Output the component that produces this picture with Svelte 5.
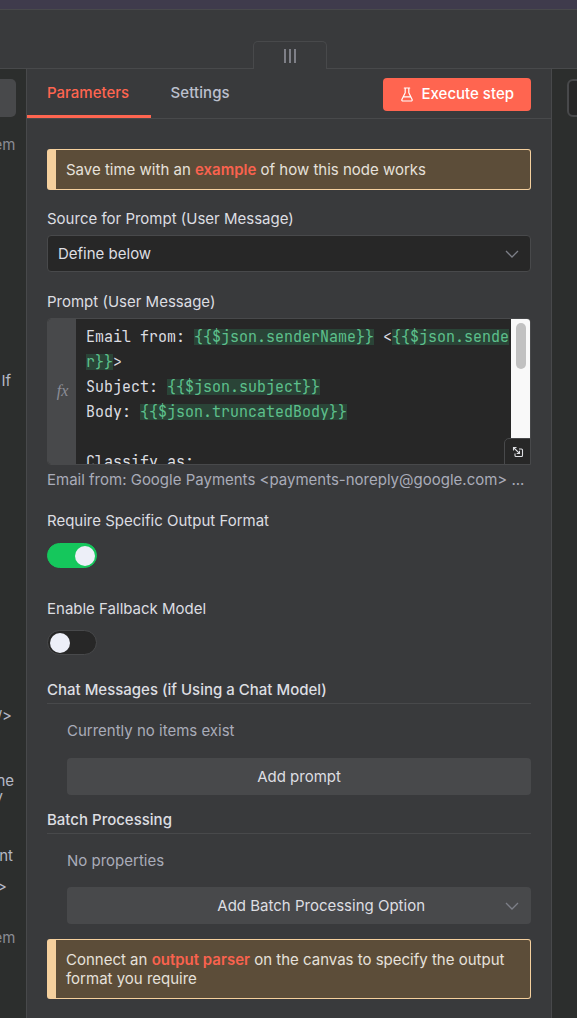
<script>
  let requireFormat = $state(true);
  let fallback = $state(false);
  const fragments = [
    { text: 'em', top: 135, right: 10.5, dim: true },
    { text: 'If', top: 371, right: 15, dim: false },
    { text: '/>', top: 706, right: 14, dim: false },
    { text: 'he', top: 771, right: 12, dim: false },
    { text: 'y', top: 787, right: 23, dim: false },
    { text: 'nt', top: 846, right: 13, dim: false },
    { text: '>', top: 877, right: 19, dim: false },
    { text: 'em', top: 928, right: 10.5, dim: true }
  ];
  const rows = fragments.map((f, i) => ({
    ...f,
    gap: i === 0 ? f.top - 117 : f.top - fragments[i - 1].top - 16
  }));
</script>

{#snippet chevron()}
  <svg class="chevron" viewBox="0 0 14 8" width="14" height="8"><path d="M1 1l6 6 6-6" /></svg>
{/snippet}

<div class="app">
  <div class="canvas-strip"></div>
  <div class="topbar">
    <div class="grip"><i></i><i></i><i></i></div>
  </div>
  <div class="columns">
    <aside class="input-side">
      <div class="side-button"></div>
      {#each rows as r}
        <div class="fragment" class:dim={r.dim} style="margin-top:{r.gap}px;padding-right:{r.right}px">{r.text}</div>
      {/each}
    </aside>

    <main>
      <header>
        <nav>
          <span class="tab active">Parameters</span>
          <span class="tab second">Settings</span>
        </nav>
        <button class="execute">
          <svg width="12" height="15" viewBox="0 0 12 15"><path d="M3.300 1h5.400M4.200 1v4.800L1 12.200c-.5 1 0 1.800.9 1.800h8.200c.9 0 1.400-.8.9-1.800L7.800 5.800V1M2.600 9.800h6.800" /></svg>
          <span>Execute step</span>
        </button>
      </header>

      <section class="body">
        <div class="notice first">Save time with an <b>example</b> of how this node works</div>

        <div class="label l1">Source for Prompt (User Message)</div>
        <div class="select"><span>Define below</span>{@render chevron()}</div>

        <div class="label l2">Prompt (User Message)</div>
        <div class="editor">
          <div class="fx">fx</div>
          <div class="code">
            <div>Email from: <mark>{'{{$json.senderName}}'}</mark> &lt;<mark>{'{{$json.sende'}</mark></div>
            <div><mark>{'r}}'}</mark>&gt;</div>
            <div>Subject: <mark>{'{{$json.subject}}'}</mark></div>
            <div>Body: <mark>{'{{$json.truncatedBody}}'}</mark></div>
            <div></div>
            <div>Classify as:</div>
          </div>
          <div class="scroll"><div class="thumb"></div></div>
          <div class="expand">
            <svg width="12" height="12" viewBox="0 0 12 12"><path d="M1.500 4.500v-3h3M1.500 1.500l5.700 5.700M7.500 4.700v2.800H4.700M7 3h2.500q1 0 1 1v5.500q0 1-1 1H4q-1 0-1-1V7.500" /></svg>
          </div>
        </div>
        <div class="hint">Email from: Google Payments &lt;payments-noreply@google.com&gt; ...</div>

        <div class="label l3">Require Specific Output Format</div>
        <button class="toggle" class:on={requireFormat} aria-label="Require Specific Output Format" onclick={() => (requireFormat = !requireFormat)}><i></i></button>

        <div class="label l4">Enable Fallback Model</div>
        <button class="toggle" class:on={fallback} aria-label="Enable Fallback Model" onclick={() => (fallback = !fallback)}><i></i></button>

        <div class="heading h1">Chat Messages (if Using a Chat Model)</div>
        <div class="group">
          <div class="empty">Currently no items exist</div>
          <button class="add">Add prompt</button>
        </div>

        <div class="heading h2">Batch Processing</div>
        <div class="group second">
          <div class="empty">No properties</div>
          <button class="add wide"><span>Add Batch Processing Option</span>{@render chevron()}</button>
        </div>

        <div class="notice last">Connect an <b>output parser</b> on the canvas to specify the output<br />format you require</div>
      </section>
    </main>

    <aside class="output-side"><div class="side-outline"></div></aside>
  </div>
</div>

<style>
  :global(body) { background: #393a3c; }
  .app, .app * { box-sizing: border-box; }
  .app {
    width: 577px; height: 1018px; overflow: hidden;
    display: flex; flex-direction: column;
    background: #393a3c; color: #dddee2;
    font: 400 15px/20px Inter, sans-serif;
  }
  button { font: inherit; color: inherit; border: 0; padding: 0; margin: 0; }
  svg { fill: none; stroke: currentColor; flex: none; }
  .canvas-strip { height: 9px; background: #3f3b4c; flex: none; }
  .topbar {
    height: 60px; flex: none; border-top: 1px solid #48494b; border-bottom: 1px solid #48494b;
    display: flex; align-items: flex-end; padding-left: 253px;
  }
  .grip {
    width: 74px; height: 28px; margin-bottom: -1px; background: #393a3c;
    border: 1px solid #48494b; border-bottom: 0; border-radius: 5px 5px 0 0;
    display: flex; justify-content: center; gap: 3px; padding-top: 7px;
  }
  .grip i { width: 2px; height: 14px; background: #7e7f87; }
  .columns { flex: 1; min-height: 0; display: grid; grid-template-columns: 26px 526px 25px; }
  .input-side { background: #2c2e2d; padding-top: 10px; overflow: hidden; }
  .side-button { width: 16px; height: 38px; background: #48494b; border-radius: 0 5px 5px 0; }
  .fragment {
    display: flex; justify-content: flex-end; height: 16px; line-height: 20px;
    color: #b5b9c6; white-space: nowrap;
  }
  .fragment.dim { color: #898b94; }
  .output-side { background: #2c2e2d; padding: 10px 0 0 15px; overflow: hidden; }
  .side-outline { width: 30px; height: 38px; border: 2px solid #48494b; border-radius: 6px; background: #272727; }

  main { border-left: 1px solid #48494b; border-right: 1px solid #48494b; min-width: 0; }
  header {
    height: 50px; border-bottom: 1px solid #48494b; padding-right: 20px;
    display: flex; justify-content: space-between; align-items: flex-start;
  }
  nav { display: flex; height: 49px; font-weight: 500; }
  .tab { line-height: 48px; padding: 0 20px; color: #bcc0ce; }
  .tab.active { width: 124px; color: #ff6550; border-bottom: 3px solid #ff6550; }
  .tab.second { padding-left: 19.500px; letter-spacing: .1px; }
  .execute {
    margin-top: 9px; width: 148px; height: 33px; border-radius: 4px; background: #ff6550; color: #fff;
    display: flex; align-items: center; padding: 0 0 1px 18px; gap: 8.500px; font-weight: 500; white-space: nowrap;
  }
  .execute svg { stroke-width: 1.200; stroke-linejoin: round; stroke-linecap: round; margin-top: 1px; }

  .body { padding: 30px 20px 0; display: flex; flex-direction: column; white-space: nowrap; }
  .notice {
    flex: none; border: 1px solid #f5d09e; border-left-width: 9px; border-radius: 3px;
    background: #5c4d39; color: #e6e1db; padding-left: 10px; line-height: 19px;
  }
  .notice b { font-weight: 600; color: #f9624e; }
  .first { height: 41px; padding-top: 10px; }
  .last { height: 60px; padding-top: 10px; margin-top: 15px; }
  .label { height: 20px; }
  .l1 { margin: 19px 0 6px; }
  .select {
    height: 37px; border: 1px solid #48494b; border-radius: 4px; background: #272727;
    display: flex; align-items: center; justify-content: space-between; padding: 0 11px 0 10px;
  }
  .chevron { color: #7d7f88; stroke-width: 1.300; }
  .l2 { margin: 20px 0 6px; }
  .editor {
    position: relative; height: 147px; overflow: hidden; display: flex;
    border: 1px solid #48494b; border-radius: 4px 4px 0 4px; background: #272727;
  }
  .fx {
    width: 28px; background: #48494b; color: #8c8e98; flex: none;
    display: flex; align-items: center; justify-content: center; padding: 0 0 2px 1px;
    font: italic 16px "Liberation Serif", serif;
  }
  .code {
    flex: 1; min-width: 0; padding: 6px 0 0 10px; color: #dddee2;
    font: 15px/25px "JetBrains Mono", "DejaVu Sans Mono", monospace; font-variant-ligatures: none;
  }
  .code div { height: 25px; white-space: pre; }
  mark { background: linear-gradient(#2a4437, #2a4437) center / 100% 16px no-repeat transparent; color: #5dc08c; }
  .scroll { width: 19px; flex: none; background: #f9f9f9; padding: 4px 4px 0 5px; }
  .thumb { width: 10px; height: 46px; border-radius: 5px; background: #c1c1c1; }
  .expand {
    position: absolute; right: -1px; bottom: -1px; width: 27px; height: 27px;
    border: 1px solid #48494b; border-radius: 5px 0 0 0; background: #272727;
    display: flex; align-items: center; justify-content: center; color: #dddee2;
  }
  .expand svg { stroke-width: 1.100; }
  .hint { height: 20px; margin-top: 5px; color: #a9acb9; }
  .l3 { margin: 21px 0 12px; }
  .l4 { margin: 31px 0 11px; }
  .toggle {
    width: 50px; height: 25px; flex: none; border: 1px solid #48494b; border-radius: 13px; background: #272727;
    display: flex; align-items: flex-start; padding: 1.500px 1px 0;
  }
  .toggle i { width: 20px; height: 20px; border-radius: 50%; background: #edeff8; margin-left: 1px; }
  .toggle.on { background: #15c75c; border-color: #15c75c; justify-content: flex-end; }
  .heading { height: 24px; border-bottom: 1px solid #48494b; font-weight: 500; }
  .h1 { margin-top: 25px; }
  .h2 { margin-top: 15px; }
  .group { padding-left: 20px; }
  .empty { height: 20px; margin: 17px 0; color: #a9acb9; }
  .second .empty { margin-bottom: 16px; }
  .add {
    width: 100%; height: 37px; border-radius: 4px; background: #48494b;
    display: flex; align-items: center; justify-content: center;
  }
  .add.wide { padding-right: 12px; justify-content: flex-end; gap: 80px; }
</style>
